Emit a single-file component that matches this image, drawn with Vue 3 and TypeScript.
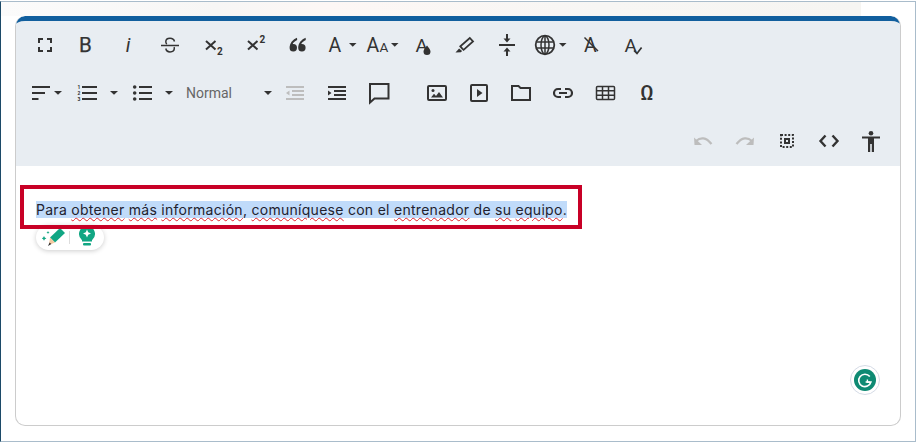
<script setup lang="ts">
const caret = '<path class="f" d="M0 0h7.5l-3.75 3.75z" transform="translate(23 10)"/>'
const t = (x: number, y: number, s: number, c: string, extra = '') =>
  `<text class="f glyph" x="${x}" y="${y}" font-size="${s}" ${extra}>${c}</text>`

const icons: Record<string, string> = {
  full: '<path class="f" d="M8 14H6v5h5v-2H8v-3zm-2-4h2V7h3V5H6v5zm12 7h-3v2h5v-5h-2v3zM15 5v2h3v3h2V5h-5z"/>',
  bold: t(11.5, 19, 20.5, 'B', 'text-anchor="middle" stroke="currentColor" stroke-width="0.25"'),
  italic: t(12, 19, 20, 'i', 'text-anchor="middle" font-style="italic"'),
  strike: '<path class="s t" d="M16.5 8.5C16 6.5 14.5 5.3 12 5.3c-2.6 0-4.2 1.5-4.2 3.5 0 1 .3 1.7 1 2.3M7.8 15.5c.4 2.3 2 3.4 4.2 3.4 2.6 0 4.3-1.4 4.3-3.3 0-.5-.1-1-.3-1.4"/><path class="s t" d="M3 12.4h18"/>',
  sub: '<path class="s b" d="M6 8l9.5 8.5M15.5 8L6 16.5"/>' + t(17, 21.5, 10, '2', 'font-weight="700"'),
  sup: '<path class="s b" d="M6 8l9.5 8.5M15.5 8L6 16.5"/>' + t(17.5, 9.5, 10, '2', 'font-weight="700"'),
  quote: '<path class="f" d="M13 4.8C9 6.5 5.6 10 5.6 15a3.7 3.7 0 1 0 3.7-3.9c-.3 0-.5 0-.7.1.5-1.7 2.2-3.2 4.6-4.3zM21.6 4.8c-4 1.7-7.4 5.2-7.4 10.2a3.7 3.7 0 1 0 3.7-3.9c-.3 0-.5 0-.7.1.5-1.7 2.2-3.2 4.6-4.3z"/>',
  font: t(2.5, 19, 19.5, 'A') + caret,
  size: t(-1.5, 19, 19.5, 'A') + t(11.5, 19, 13.5, 'A') + caret,
  color: t(5.5, 19, 19, 'A') + '<path class="f" d="M17 12.5c1.9 2.5 3.5 4.1 3.5 6.1a3.5 3.5 0 0 1-7 0c0-2 1.6-3.6 3.5-6.1z"/>',
  marker: '<path class="f" d="M3.5 19.5l3.6-4 3 2.6-1.2 1.1z"/><path class="s" stroke-width="1.8" d="M10.3 15.6 8.3 13.4 17.8 5l3.2 3.4-9.4 8.4z"/>',
  valign: '<path class="s b" d="M5 12h16M13 1v5M13 23v-6"/><path class="f" d="M9.5 5.5h7L13 9.5zM9.5 18.5h7L13 14.5z"/>',
  globe: '<circle class="s" stroke-width="1.8" cx="9" cy="12" r="9.3"/><ellipse class="s t" cx="9" cy="12" rx="4" ry="9"/><path class="s t" d="M9 3v18M.6 9h16.8M.6 15h16.8"/>' + caret,
  clear: t(6, 19, 19.5, 'A') + '<path class="s t" d="M6.5 4.5 20 18"/>',
  spell: t(4.5, 19, 19, 'A') + '<path class="s" stroke-width="1.7" d="M14 17.5l3 3 4.6-6"/>',
  align: '<path class="s b" d="M3 6h18M3 12h13M3 18h6.5"/><path class="f" d="M0 0h8l-4 3.8z" transform="translate(25 10)"/>',
  ol: t(2.5, 8, 5, '1', 'font-weight="700"') + t(2.5, 14, 5, '2', 'font-weight="700"') + t(2.5, 20, 5, '3', 'font-weight="700"') +
    '<path class="s b" d="M7 6h15M7 12h15M7 18h15"/><path class="f" d="M0 0h8l-4 3.8z" transform="translate(35 10)"/>',
  ul: '<circle class="f" cx="4.7" cy="6" r="1.8"/><circle class="f" cx="4.7" cy="12" r="1.8"/><circle class="f" cx="4.7" cy="18" r="1.8"/><path class="s b" d="M9 6h13M9 12h13M9 18h13"/><path class="f" d="M0 0h8l-4 3.8z" transform="translate(35 10)"/>',
  outdent: '<path class="s" stroke-width="2" d="M3 6h18M9 10h12M9 14h12M3 18h18"/><path class="f" d="M6.5 9.5v5L3 12z"/>',
  indent: '<path class="s" stroke-width="2" d="M3 6h18M9 10h12M9 14h12M3 18h18"/><path class="f" d="M3 9.5v5L6.5 12z"/>',
  comment: '<path class="s b" d="M3 3h18.5v14.5H7.5L3 21.5z"/>',
  image: '<rect class="s b" x="3" y="5" width="18" height="14" rx="1"/><circle class="f" cx="8" cy="9.5" r="1.5"/><path class="f" d="M6 16.5l3-3.8 2 2.4 3-4 4 5.4z"/>',
  video: '<rect class="s b" x="4" y="4" width="16" height="16" rx="1"/><path class="f" d="M10 8v8l5.5-4z"/>',
  folder: '<path class="s b" d="M3 5h6.5l2 2H21v12H3z"/>',
  link: '<path class="s w" d="M10 8H7a4 4 0 0 0 0 8h3M14 8h3a4 4 0 0 1 0 8h-3M8 12h8"/>',
  table: '<rect class="s t" x="3.5" y="5.5" width="18" height="13" rx="1"/><path class="s t" d="M3.5 9.8h18M3.5 14.2h18M9.5 5.5v13M15.5 5.5v13"/>',
  omega: t(12, 19, 20, 'Ω', 'text-anchor="middle" font-weight="500"'),
  undo: '<path class="s w" d="M5 12c4.5-4 10-4 15.5 3"/><path class="f" d="M3 8.5 3.5 16h7.5z"/>',
  redo: '<path class="s w" d="M19 12c-4.5-4-10-4-15.5 3"/><path class="f" d="M21 8.5 20.5 16H13z"/>',
  select: '<rect class="s" stroke-width="2" stroke-dasharray="2 1.6" x="6" y="6" width="12" height="12"/><path class="f" fill-rule="evenodd" d="M9 9h6v6H9zM11 11v2h2v-2z"/>',
  code: '<path class="s" stroke-width="2.4" d="M8.5 6.5 3.5 12l5 5.5M15.5 6.5l5 5.5-5 5.5"/>',
  access: '<circle class="f" cx="12" cy="4.2" r="2.3"/><path class="f" d="M3 7.5h18v2h-6V23h-2.2v-8h-1.6v8H9V9.5H3z"/>'
}

const rowOne = ['full', 'bold', 'italic', 'strike', 'sub', 'sup', 'quote', 'font', 'size', 'color', 'marker', 'valign', 'globe', 'clear', 'spell']
const rowTwoEnd = ['outdent', 'indent', 'comment']
const rowTwoLast = ['image', 'video', 'folder', 'link', 'table', 'omega']
const rowThree = ['undo', 'redo', 'select', 'code', 'access']

const words: [string, boolean][] = [
  ['Para', false], ['obtener', true], ['más', true], ['información', true], [',', false],
  ['comuníquese', true], ['con el', false], ['entrenador', true], ['de', false], ['su', true], ['equipo', true], ['.', false]
]
const noSpaceBefore = (i: number) => i + 1 < words.length && (words[i + 1][0] === ',' || words[i + 1][0] === '.')
</script>

<template>
  <div class="page">
    <div class="band"></div>
    <section class="editor">
      <div class="toolbar">
        <div class="row">
          <button v-for="k in rowOne" :key="k" class="btn">
            <svg width="24" height="24" viewBox="0 0 24 24" v-html="icons[k]"></svg>
          </button>
        </div>
        <div class="row row-two">
          <button class="btn"><svg width="24" height="24" viewBox="0 0 24 24" v-html="icons.align"></svg></button>
          <button class="btn w50"><svg width="24" height="24" viewBox="0 0 24 24" v-html="icons.ol"></svg></button>
          <button class="btn w60"><svg width="24" height="24" viewBox="0 0 24 24" v-html="icons.ul"></svg></button>
          <button class="select-btn">
            <span>Normal</span>
            <i class="caret"></i>
          </button>
          <button v-for="k in rowTwoEnd" :key="k" class="btn" :class="{ off: k === 'outdent' }">
            <svg width="24" height="24" viewBox="0 0 24 24" v-html="icons[k]"></svg>
          </button>
          <div class="group">
            <button v-for="k in rowTwoLast" :key="k" class="btn">
              <svg width="24" height="24" viewBox="0 0 24 24" v-html="icons[k]"></svg>
            </button>
          </div>
        </div>
        <div class="row row-three">
          <button v-for="k in rowThree" :key="k" class="btn" :class="{ off: k === 'undo' || k === 'redo' }">
            <svg width="24" height="24" viewBox="0 0 24 24" v-html="icons[k]"></svg>
          </button>
        </div>
      </div>
      <div class="body">
        <div class="highlight">
          <p class="para"><span class="sel"><template v-for="(w, i) in words" :key="i"><span :class="{ spell: w[1] }">{{ w[0] }}</span><template v-if="i < words.length - 1 && !noSpaceBefore(i)">{{ ' ' }}</template></template></span></p>
        </div>
        <div class="pill">
          <svg class="pencil" width="24" height="20" viewBox="0 0 24 20">
            <path fill="#11a683" d="M8 10.5 18 1l5 5-10 9.5z" />
            <path fill="#f2c9a0" d="M8 10.5l5 5-6 2.5z" />
            <path fill="#333" d="M7.6 15.4l1.8 1.7L6 19z" />
            <path fill="#11a683" d="M2 9l.8 1.6L4.4 11.4l-1.6.8L2 13.8l-.8-1.6L-.4 11.4l1.6-.8zM6 4l.5 1 1 .5-1 .5L6 7l-.5-1-1-.5 1-.5z" />
          </svg>
          <span class="sep"></span>
          <svg class="bulb" width="18" height="20" viewBox="0 0 18 20">
            <path fill="#11a683" d="M9 0a8 8 0 0 1 5 14.2V15.5H4v-1.3A8 8 0 0 1 9 0z" />
            <path fill="#fff" d="M9 3.5l1.2 2.8L13 7.5l-2.8 1.2L9 11.5 7.8 8.7 5 7.5l2.8-1.2z" />
            <rect fill="#11a683" x="5" y="17" width="8" height="2.6" rx="1" />
          </svg>
        </div>
        <div class="grammarly">
          <svg width="22" height="22" viewBox="0 0 22 22">
            <circle cx="11" cy="11" r="11" fill="#0e8a73" />
            <path fill="none" stroke="#fff" stroke-width="1.6" d="M15.8 7.6A6.2 6.2 0 1 0 16.9 13H11.6" />
            <path fill="none" stroke="#fff" stroke-width="1.4" d="M13.4 10.6v2.6h2.6" />
          </svg>
        </div>
      </div>
    </section>
  </div>
</template>

<style scoped>
.page {
  position: relative;
  box-sizing: border-box;
  width: 916px;
  height: 441px;
  margin-top: 1px;
  padding: 14px 14px 0;
  background: #fff;
  border-top: 1px solid #a9bccb;
  border-left: 1px solid #1c4a68;
  border-right: 1px solid #a9bccb;
  border-bottom: 1px solid #a9bccb;
  overflow: hidden;
}
.band {
  position: absolute;
  left: 0;
  top: 0;
  width: 860px;
  height: 14px;
  background: linear-gradient(90deg, #fbfbfb 0%, #f7f6f5 25%, #fdf7f5 38%, #f7f6f4 70%, #f6f5f2 100%);
}
.editor {
  position: relative;
  box-sizing: border-box;
  width: 886px;
  height: 410px;
  background: #fff;
  border: 1px solid #cccccc;
  border-top: 0;
  border-radius: 10px;
  overflow: hidden;
}
.toolbar {
  box-sizing: border-box;
  height: 150px;
  margin: 0 -1px;
  padding-left: 1px;
  background: #e8edf2;
  border-top: 5px solid #115f9e;
  border-radius: 10px 10px 0 0;
}
.row {
  display: flex;
  height: 48px;
  padding-left: 7px;
}
.row-two {
  padding-left: 4px;
}
.row-three {
  justify-content: flex-end;
  padding-right: 9px;
}
.btn {
  display: flex;
  flex: none;
  align-items: center;
  justify-content: center;
  width: 42px;
  height: 48px;
  padding: 0;
  color: #333;
  background: none;
  border: 0;
}
.btn.off {
  color: #bdbdbd;
}
.btn svg {
  overflow: visible;
}
.w50 {
  width: 50px;
}
.w60 {
  width: 60px;
}
.btn :deep(.f) {
  fill: currentColor;
}
.btn :deep(.s) {
  fill: none;
  stroke: currentColor;
}
.btn :deep(.t) {
  stroke-width: 1.5;
}
.btn :deep(.b) {
  stroke-width: 2;
}
.btn :deep(.w) {
  stroke-width: 2.2;
}
.btn :deep(.glyph) {
  font-family: Roboto, "Liberation Sans", sans-serif;
}
.select-btn {
  display: flex;
  flex: none;
  align-items: center;
  box-sizing: border-box;
  width: 102px;
  height: 48px;
  padding: 0 0 0 14px;
  color: #666;
  font: 14px Roboto, "Liberation Sans", sans-serif;
  background: none;
  border: 0;
}
.caret {
  width: 0;
  height: 0;
  margin-left: 32px;
  border-top: 4px solid #333;
  border-left: 4px solid transparent;
  border-right: 4px solid transparent;
}
.group {
  display: flex;
  margin-left: 16px;
}
.body {
  position: relative;
  padding: 19px 0 0 4px;
}
.highlight {
  position: relative;
  z-index: 2;
  box-sizing: border-box;
  width: 562px;
  height: 44px;
  padding: 11px 12px;
  border: 4px solid #c80026;
}
.para {
  margin: 0;
  color: #22222e;
  font: 14px/19px "Inter", "Liberation Sans", sans-serif;
  letter-spacing: 0.28px;
  white-space: nowrap;
}
.sel {
  background: #c0dbfa;
}
.spell {
  text-decoration: underline wavy #e0202a 1px;
  text-underline-offset: 2px;
}
.pill {
  position: absolute;
  left: 20px;
  top: 59px;
  z-index: 1;
  display: flex;
  align-items: center;
  box-sizing: border-box;
  width: 68px;
  height: 25px;
  padding: 0 0 0 6px;
  background: #fff;
  border-radius: 13px;
  box-shadow: 0 1px 5px rgba(0, 0, 0, 0.2);
}
.bulb {
  margin-bottom: 4px;
}
.pencil {
  margin-bottom: 1px;
}
.sep {
  width: 1px;
  height: 13px;
  margin: 0 8px 0 3px;
  background: #ddd;
}
.grammarly {
  position: absolute;
  left: 834px;
  top: 199px;
  display: flex;
  align-items: center;
  justify-content: center;
  box-sizing: border-box;
  width: 30px;
  height: 30px;
  background: #fff;
  border: 1px solid #d5dbe6;
  border-radius: 50%;
}
</style>
